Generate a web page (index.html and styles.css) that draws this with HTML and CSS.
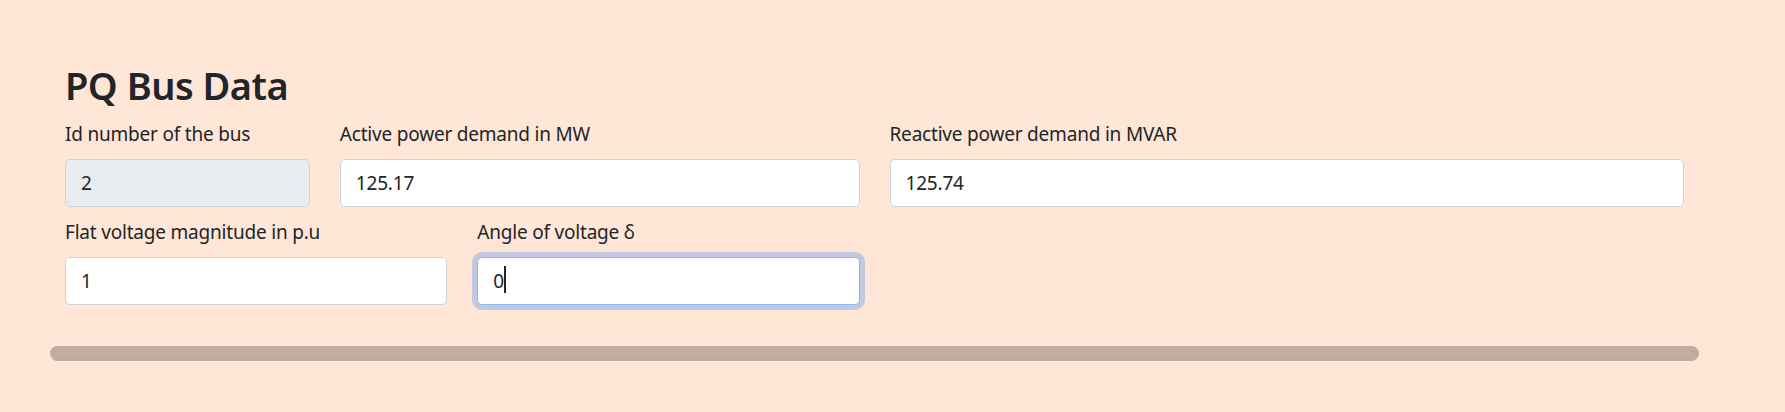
FILE: index.html
```html
<!DOCTYPE html>
<html lang="en">
<head>
<meta charset="utf-8">
<title>PQ Bus Data</title>
<link rel="stylesheet" href="styles.css">
</head>
<body>
<div class="page">
  <section class="panel">
    <h2 class="title">PQ Bus Data</h2>
    <div class="grid">
      <div class="field span-2">
        <label class="label">Id number of the bus</label>
        <input class="control disabled" type="text" value="2" disabled>
      </div>
      <div class="field span-4">
        <label class="label">Active power demand in MW</label>
        <input class="control" type="text" value="125.17">
      </div>
      <div class="field span-6">
        <label class="label">Reactive power demand in MVAR</label>
        <input class="control" type="text" value="125.74">
      </div>
      <div class="field span-3">
        <label class="label">Flat voltage magnitude in p.u</label>
        <input class="control" type="text" value="1">
      </div>
      <div class="field span-3">
        <label class="label">Angle of voltage δ</label>
        <div class="control-wrap">
          <input class="control focused" type="text" value="0">
          <span class="caret"></span>
        </div>
      </div>
    </div>
  </section>
  <div class="bar"><div class="bar-line"></div></div>
</div>
</body>
</html>
```

FILE: styles.css
```css
html, body {
  margin: 0;
  padding: 0;
  background: #ffe6d6;
}

body {
  font-family: "Noto Sans", "Open Sans", sans-serif;
  color: #212529;
  font-size: 19px;
  letter-spacing: -0.2px;
  line-height: 1.5;
}

.page {
  width: 1649px;
  padding: 61px 0 40px 50px;
}

.panel {
  padding: 0 15px;
}

.title {
  margin: 0 0 10px;
  font-size: 38px;
  letter-spacing: -0.5px;
  line-height: 48px;
  font-weight: 600;
}

.grid {
  display: grid;
  grid-template-columns: repeat(12, 1fr);
  column-gap: 30px;
  row-gap: 10px;
}

.span-2 { grid-column: span 2; }
.span-3 { grid-column: span 3; }
.span-4 { grid-column: span 4; }
.span-6 { grid-column: span 6; }

.field {
  display: flex;
  flex-direction: column;
}

.label {
  display: block;
  margin-bottom: 10px;
  line-height: 30px;
}

.control-wrap {
  position: relative;
}

.control {
  box-sizing: border-box;
  display: block;
  width: 100%;
  height: 48px;
  padding: 7px 15px;
  font-family: inherit;
  font-size: 19px;
  letter-spacing: -0.2px;
  line-height: 30px;
  color: #212529;
  background: #ffffff;
  border: 1px solid #ced4da;
  border-radius: 5px;
  outline: none;
}

.control.disabled {
  background: #e9ecef;
  opacity: 1;
  color: #212529;
  -webkit-text-fill-color: #212529;
}

.control.focused {
  border-color: #86b7fe;
  box-shadow: 0 0 0 5px rgba(13, 110, 253, 0.25);
}

.caret {
  position: absolute;
  left: 27px;
  top: 9px;
  width: 2px;
  height: 27px;
  background: #212529;
}

.bar {
  margin-top: 41px;
  height: 15px;
  border-radius: 8px;
  background: #c0ad9e;
  display: flex;
  align-items: center;
  padding: 0 7px;
}

.bar-line {
  flex: 1;
  height: 1px;
  background: #c9b8aa;
}
```
